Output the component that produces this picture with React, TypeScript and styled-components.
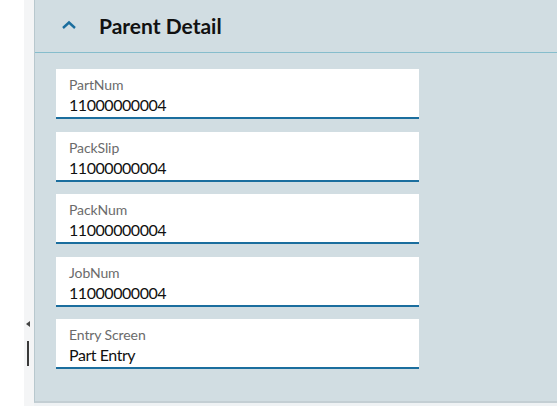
import React from "react";
import styled, { createGlobalStyle } from "styled-components";

const Global = createGlobalStyle`
  html, body { margin: 0; padding: 0; background: #ffffff; }
  body { font-family: Lato, "Noto Sans", sans-serif; }
`;

const Page = styled.div`
  display: flex;
  width: 557px;
  height: 406px;
  overflow: hidden;
`;

const WhiteGutter = styled.div`
  width: 24px;
  flex: none;
  background: #ffffff;
`;

const Rail = styled.div`
  width: 10px;
  flex: none;
  background: #f4f5f6;
  display: flex;
  flex-direction: column;
  align-items: center;
  padding-top: 321px;
  box-sizing: border-box;
`;

const RailArrow = styled.div`
  width: 0;
  height: 0;
  border-top: 3px solid transparent;
  border-bottom: 3px solid transparent;
  border-right: 4px solid #444;
  margin-left: -2px;
`;

const RailBar = styled.div`
  width: 2px;
  height: 25px;
  background: #3a3a3a;
  margin-top: 14px;
  margin-left: -2px;
`;

const Main = styled.div`
  flex: 1;
  display: flex;
  flex-direction: column;
  background: #eff2f4;
`;

const Panel = styled.section`
  height: 403px;
  box-sizing: border-box;
  background: #d1dde2;
  border-left: 1px solid #b8c8ce;
  border-bottom: 2px solid #c3ced3;
  display: flex;
  flex-direction: column;
`;

const Header = styled.div`
  height: 53px;
  box-sizing: border-box;
  border-bottom: 1px solid #86bdcc;
  display: flex;
  align-items: center;
  padding-left: 26px;
  padding-bottom: 2px;
`;

const Chevron = styled.svg`
  width: 16px;
  height: 10px;
  margin-right: 22px;
`;

const Title = styled.h2`
  margin: 0;
  font-size: 21px;
  font-weight: 700;
  color: #111;
`;

const Fields = styled.div`
  display: flex;
  flex-direction: column;
  gap: 12.5px;
  padding: 16px 0 0 21px;
`;

const Field = styled.div`
  width: 363px;
  height: 50px;
  box-sizing: border-box;
  background: #ffffff;
  border-bottom: 2px solid #1b6e9e;
  padding: 8px 13px 0;
  display: flex;
  flex-direction: column;
`;

const Label = styled.div`
  font-size: 14px;
  color: #6b6b6b;
  line-height: 16px;
  letter-spacing: -0.1px;
`;

const Value = styled.div`
  font-size: 16px;
  color: #111;
  line-height: 20px;
  margin-top: 2px;
  letter-spacing: -0.45px;
`;

const fields = [
  { label: "PartNum", value: "11000000004" },
  { label: "PackSlip", value: "11000000004" },
  { label: "PackNum", value: "11000000004" },
  { label: "JobNum", value: "11000000004" },
  { label: "Entry Screen", value: "Part Entry" },
];

export default function App() {
  return (
    <>
      <Global />
      <Page>
        <WhiteGutter />
        <Rail>
          <RailArrow />
          <RailBar />
        </Rail>
        <Main>
          <Panel>
            <Header>
              <Chevron viewBox="0 0 16 10">
                <path d="M2 8 L8 2.5 L14 8" fill="none" stroke="#1b6e9e" strokeWidth="2.4" />
              </Chevron>
              <Title>Parent Detail</Title>
            </Header>
            <Fields>
              {fields.map((f) => (
                <Field key={f.label}>
                  <Label>{f.label}</Label>
                  <Value>{f.value}</Value>
                </Field>
              ))}
            </Fields>
          </Panel>
        </Main>
      </Page>
    </>
  );
}
